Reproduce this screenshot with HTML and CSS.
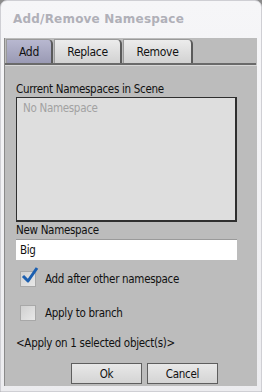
FILE: index.html
```html
<!DOCTYPE html>
<html lang="en">
<head>
    <meta charset="UTF-8">
    <title>Add/Remove Namespace</title>
    <link rel="stylesheet" href="styles.css">
</head>
<body>
    <div class="window">
        <div class="title-bar">Add/Remove Namespace</div>

        <div class="client">
            <div class="tabs">
                <div class="tab active">Add</div>
                <div class="tab">Replace</div>
                <div class="tab">Remove</div>
            </div>

            <div class="panel">
                <div class="label first">Current Namespaces in Scene</div>
                <div class="list-box">
                    <div class="list-item">No Namespace</div>
                </div>

                <div class="label">New Namespace</div>
                <div class="text-field">Big</div>

                <div class="check-row checked-row">
                    <span class="check-box">
                        <svg class="tick" width="20" height="20" viewBox="0 0 20 20">
                            <path d="M3 10 L8 15 L17 2" fill="none" stroke="#1c5fb0" stroke-width="3" stroke-linejoin="round"/>
                        </svg>
                    </span>
                    <span>Add after other namespace</span>
                </div>

                <div class="check-row">
                    <span class="check-box"></span>
                    <span>Apply to branch</span>
                </div>

                <div class="status">&lt;Apply on 1 selected object(s)&gt;</div>

                <div class="buttons">
                    <button class="btn">Ok</button>
                    <button class="btn">Cancel</button>
                </div>
            </div>
        </div>
    </div>
</body>
</html>
```

FILE: styles.css
```css
body {
    margin: 0;
    padding: 0;
    background: #8c8c8c;
    font-family: 'DejaVu Sans Condensed', 'DejaVu Sans', sans-serif;
    font-size: 11.5px;
    letter-spacing: -0.3px;
    color: #111;
}

.window {
    width: 262px;
    height: 392px;
    box-sizing: border-box;
    background: linear-gradient(180deg, #f6f6f8, #ececef);
    border: 1px solid #cfcfd4;
    border-radius: 7px 7px 0 0;
    padding: 0 4px 5px 3px;
    display: flex;
    flex-direction: column;
}

.title-bar {
    height: 37px;
    flex-shrink: 0;
    padding-left: 9px;
    line-height: 36px;
    font-family: 'DejaVu Sans', sans-serif;
    font-size: 12px;
    font-weight: bold;
    color: #b0b0b8;
    letter-spacing: 0.2px;
}

.client {
    flex: 1;
    min-height: 0;
    background: #bcbcbc;
    border-left: 1px solid #8a8a8a;
    display: flex;
    flex-direction: column;
}

.tabs {
    display: flex;
    flex-shrink: 0;
    padding: 1px 0 0 1px;
    height: 24px;
    border-bottom: 2px solid #6a6a6a;
    margin-right: 1px;
}

.tab {
    height: 24px;
    box-sizing: border-box;
    padding: 0;
    text-align: center;
    line-height: 24px;
    font-size: 12px;
    background: linear-gradient(180deg, #ececec, #d2d2d2);
    border: 1px solid #9a9a9a;
    border-right: 2px solid #5a5a5a;
    border-bottom: none;
    border-radius: 0 5px 0 0;
    margin-right: 1px;
}

.tab.active {
    width: 47px;
    background: linear-gradient(180deg, #b8b8d0, #9a9ab4);
}

.tab:nth-child(2) { width: 68px; }
.tab:nth-child(3) { width: 70px; }

.panel {
    flex: 1;
    border-top: 1px solid #d8d8d8;
    padding: 0 0 0 11px;
    display: flex;
    flex-direction: column;
}

.panel > * {
    flex-shrink: 0;
}

.label {
    height: 14px;
    line-height: 14px;
    margin-top: 1px;
}

.label.first {
    margin-top: 16px;
}

.list-box {
    width: 221px;
    height: 125px;
    box-sizing: border-box;
    margin-top: 1px;
    background: #dedede;
    border: 1px solid #2e2e2e;
    border-right-width: 2px;
    border-bottom-width: 2px;
    padding: 3px 6px;
}

.list-item {
    color: #a2a2a2;
}

.text-field {
    width: 221px;
    height: 21px;
    box-sizing: border-box;
    margin-top: 2px;
    background: #fff;
    border-top: 1px solid #9a9a9a;
    padding-left: 4px;
    line-height: 20px;
}

.check-row {
    display: flex;
    align-items: center;
    gap: 9px;
    height: 16px;
    margin-top: 11px;
    padding-left: 4px;
}

.check-row + .check-row {
    margin-top: 18px;
}

.check-box {
    position: relative;
    width: 14px;
    height: 14px;
    flex-shrink: 0;
    background: linear-gradient(135deg, #d0d0d0, #e8e8e8);
    border: 1px solid #a8a8a8;
}

.tick {
    position: absolute;
    left: -1px;
    top: -6px;
}

.status {
    margin-top: 16px;
    height: 13px;
    line-height: 13px;
}

.buttons {
    display: flex;
    gap: 5px;
    margin-top: 13px;
    padding-left: 55px;
}

.btn {
    width: 71px;
    height: 21px;
    font-family: inherit;
    font-size: 11.5px;
    letter-spacing: inherit;
    color: #111;
    background: linear-gradient(180deg, #e8e8e8, #d4d4d4);
    border: 1px solid #5e5e5e;
    border-radius: 0;
    padding: 0;
}
```
